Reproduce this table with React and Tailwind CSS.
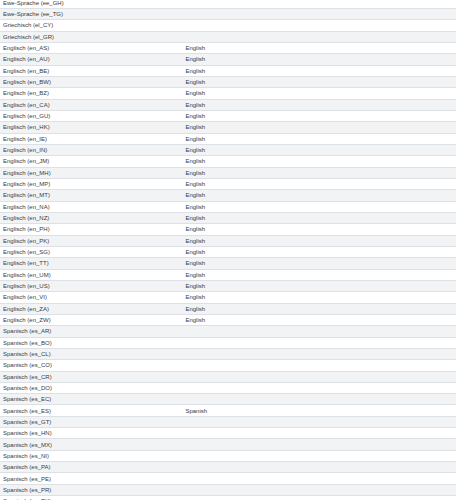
const rows = [
  ["Ewe-Sprache (ee_GH)", ""],
  ["Ewe-Sprache (ee_TG)", ""],
  ["Griechisch (el_CY)", ""],
  ["Griechisch (el_GR)", ""],
  ...["AS", "AU", "BE", "BW", "BZ", "CA", "GU", "HK", "IE", "IN", "JM", "MH", "MP", "MT", "NA", "NZ", "PH", "PK", "SG", "TT", "UM", "US", "VI", "ZA", "ZW"].map(
    (c) => [`Englisch (en_${c})`, "English"]
  ),
  ...["AR", "BO", "CL", "CO", "CR", "DO", "EC", "ES", "GT", "HN", "MX", "NI", "PA", "PE", "PR", "PY"].map(
    (c) => [`Spanisch (es_${c})`, c === "ES" ? "Spanish" : ""]
  ),
];

export default function App() {
  return (
    <div className="h-[500px] w-[456px] overflow-hidden bg-white font-['Liberation_Sans',Arial,sans-serif] text-[6px] text-[#3a3a3a]">
      <div className="-mt-[3.33px]">
        {rows.map(([locale, name], i) => (
          <div
            key={locale}
            className={`grid h-[11.333px] grid-cols-[40%_60%] items-center border-t border-[#dde1e5] ${
              i % 2 ? "bg-[#f2f3f5]" : "bg-white"
            }`}
          >
            <span className="pl-[3px] leading-none">{locale}</span>
            <span className="pl-[3px] leading-none">{name}</span>
          </div>
        ))}
      </div>
    </div>
  );
}
